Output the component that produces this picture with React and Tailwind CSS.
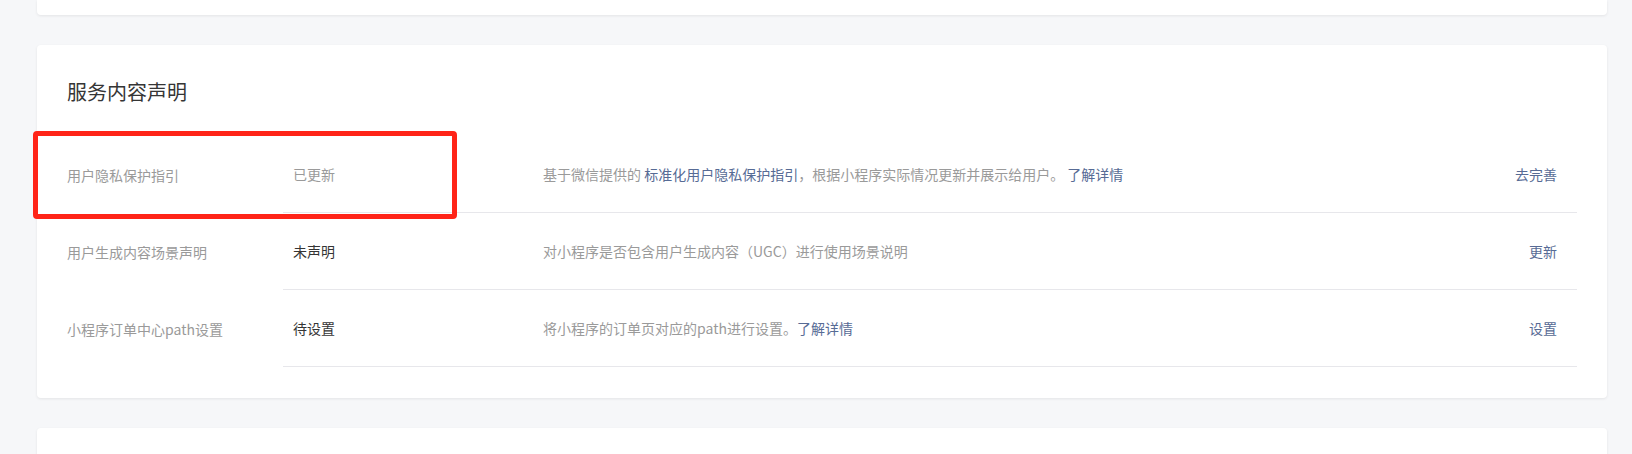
import React from "react";

const rows = [
  {
    label: "用户隐私保护指引",
    status: "已更新",
    statusMuted: true,
    desc: (
      <>
        基于微信提供的 <span className="text-[#576b95]">标准化用户隐私保护指引</span>，根据小程序实际情况更新并展示给用户。{" "}
        <span className="text-[#576b95]">了解详情</span>
      </>
    ),
    action: "去完善",
  },
  {
    label: "用户生成内容场景声明",
    status: "未声明",
    statusMuted: false,
    desc: <>对小程序是否包含用户生成内容（UGC）进行使用场景说明</>,
    action: "更新",
  },
  {
    label: "小程序订单中心path设置",
    status: "待设置",
    statusMuted: false,
    desc: (
      <>
        将小程序的订单页对应的path进行设置。<span className="text-[#576b95]">了解详情</span>
      </>
    ),
    action: "设置",
  },
];

export default function App() {
  return (
    <div
      className="min-h-[454px] bg-[#f6f7f9] pl-[37px] overflow-hidden"
      style={{ fontFamily: '"Noto Sans CJK SC", "Noto Sans", sans-serif' }}
    >
      {/* previous card (bottom part) */}
      <div className="w-[1570px] h-[15px] bg-white rounded-b-[4px] shadow-[0_1px_3px_rgba(0,0,0,0.08)]" />

      {/* main card */}
      <div className="relative mt-[30px] w-[1570px] bg-white rounded-[4px] shadow-[0_1px_3px_rgba(0,0,0,0.08)] pt-[33px] pb-[31px] px-[30px]">
        <h2 className="text-[20px] leading-[28px] text-[#353535] font-normal">服务内容声明</h2>

        <div className="mt-[30px] flex flex-col">
          {rows.map((r) => (
            <div key={r.label} className="flex h-[77px]">
              <div className="w-[216px] flex items-center text-[14px] leading-[20px] text-[#9a9a9a]">
                {r.label}
              </div>
              <div className="flex-1 flex items-center border-b border-[#e7e7eb] text-[14px] leading-[20px]">
                <div className={`w-[250px] pl-[10px] ${r.statusMuted ? "text-[#9a9a9a]" : "text-[#353535]"}`}>
                  {r.status}
                </div>
                <div className="flex-1 pl-[10px] text-[#9a9a9a]">{r.desc}</div>
                <div className="pr-[20px] text-[#576b95]">{r.action}</div>
              </div>
            </div>
          ))}
        </div>

        {/* annotation highlight */}
        <div className="absolute left-[-4px] top-[86px] w-[424px] h-[88px] border-[5px] border-[#ff2418] rounded-[4px] pointer-events-none" />
      </div>

      {/* next card (top part) */}
      <div className="mt-[30px] w-[1570px] h-[120px] bg-white rounded-[4px] shadow-[0_1px_3px_rgba(0,0,0,0.08)]" />
    </div>
  );
}
